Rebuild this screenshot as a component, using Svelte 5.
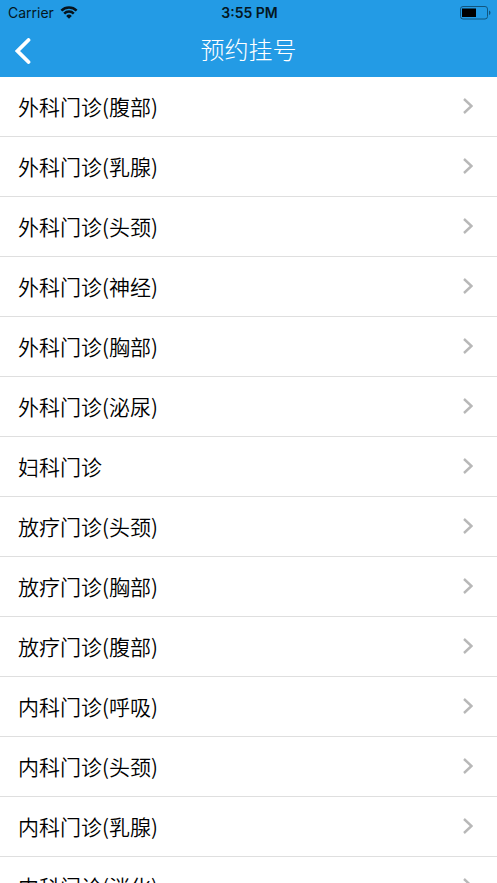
<script>
    const departments = [
        '外科门诊(腹部)',
        '外科门诊(乳腺)',
        '外科门诊(头颈)',
        '外科门诊(神经)',
        '外科门诊(胸部)',
        '外科门诊(泌尿)',
        '妇科门诊',
        '放疗门诊(头颈)',
        '放疗门诊(胸部)',
        '放疗门诊(腹部)',
        '内科门诊(呼吸)',
        '内科门诊(头颈)',
        '内科门诊(乳腺)',
        '内科门诊(消化)',
    ]

    let selected = $state('')
</script>

<div class="app">
    <header>
        <div class="status">
            <div class="carrier">
                <span>Carrier</span>
                <svg width="18" height="13" viewBox="0 0 18 13" aria-hidden="true">
                    <path d="M1.4 4.6 A10.8 10.8 0 0 1 16.6 4.6" />
                    <path d="M4.2 7.6 A6.8 6.8 0 0 1 13.8 7.6" />
                    <path class="dot" d="M6.2 9.9 A4 4 0 0 1 11.8 9.9 L9 12.7 Z" />
                </svg>
            </div>
            <span class="time">3:55 PM</span>
            <svg class="battery" width="31" height="14" viewBox="0 0 31 14" aria-hidden="true">
                <rect class="case" x="0.5" y="0.5" width="27" height="12.5" rx="2.5" />
                <rect x="2" y="2.5" width="14" height="8.5" />
                <path class="tip" d="M29 4.5 Q30.5 5 30.5 6.8 Q30.5 8.5 29 9 Z" />
            </svg>
        </div>
        <nav>
            <button class="back" aria-label="返回">
                <svg width="16" height="26" viewBox="0 0 16 26" aria-hidden="true">
                    <path d="M13.5 2 L2.5 13 L13.5 24" />
                </svg>
            </button>
            <h1>预约挂号</h1>
        </nav>
    </header>

    <ul class="list">
        {#each departments as name (name)}
            <li>
                <button class="item" aria-pressed={selected === name} onclick={() => (selected = name)}>
                    <span>{name}</span>
                    <svg width="10" height="16" viewBox="0 0 10 16" aria-hidden="true">
                        <path d="M1 1 L8.5 8 L1 15" />
                    </svg>
                </button>
            </li>
        {/each}
    </ul>
</div>

<style>
    :global(body) {
        margin: 0;
        background: #fff;
    }

    .app {
        display: flex;
        flex-direction: column;
        height: 100vh;
        color: #000;
        font-family: 'Noto Sans CJK SC', 'Noto Sans', sans-serif;
    }

    header {
        flex: none;
        background: #239be5;
    }

    .status {
        display: grid;
        grid-template-columns: 1fr auto 1fr;
        align-items: center;
        height: 25px;
        padding: 0 6px 0 8px;
        font-family: Inter, 'Liberation Sans', sans-serif;
        font-size: 14px;
        color: #041722;
    }

    .carrier {
        display: flex;
        align-items: center;
        gap: 6px;
    }

    .carrier path {
        fill: none;
        stroke: #06131c;
        stroke-width: 2.5;
    }

    .carrier .dot {
        fill: #06131c;
        stroke: none;
    }

    .time {
        font-weight: 600;
    }

    .battery {
        justify-self: end;
    }

    .case {
        fill: none;
        stroke: #11567f;
    }

    .tip {
        fill: #11567f;
    }

    nav {
        display: grid;
        grid-template-columns: 48px 1fr 48px;
        align-items: center;
        height: 52px;
    }

    button {
        border: 0;
        background: none;
        color: inherit;
        font: inherit;
        cursor: pointer;
    }

    .back {
        display: flex;
        align-items: center;
        height: 52px;
        padding: 0 15px;
    }

    .back path {
        fill: none;
        stroke: #fff;
        stroke-width: 3.8;
        stroke-linecap: round;
    }

    h1 {
        margin: 0;
        padding-bottom: 4px;
        color: #fff;
        font-size: 24px;
        font-weight: 300;
        line-height: 48px;
        text-align: center;
    }

    .list {
        flex: 1;
        min-height: 0;
        margin: 0;
        padding: 0;
        overflow-y: auto;
        list-style: none;
        scrollbar-width: none;
    }

    li {
        border-bottom: 1px solid #dfdfdf;
    }

    .item {
        display: flex;
        align-items: center;
        justify-content: space-between;
        width: 100%;
        height: 59px;
        padding: 0 24px 2px 18px;
        font-size: 21px;
        font-weight: 350;
        text-align: left;
    }

    .item path {
        fill: none;
        stroke: #b8b8b8;
        stroke-width: 2.4;
    }
</style>
